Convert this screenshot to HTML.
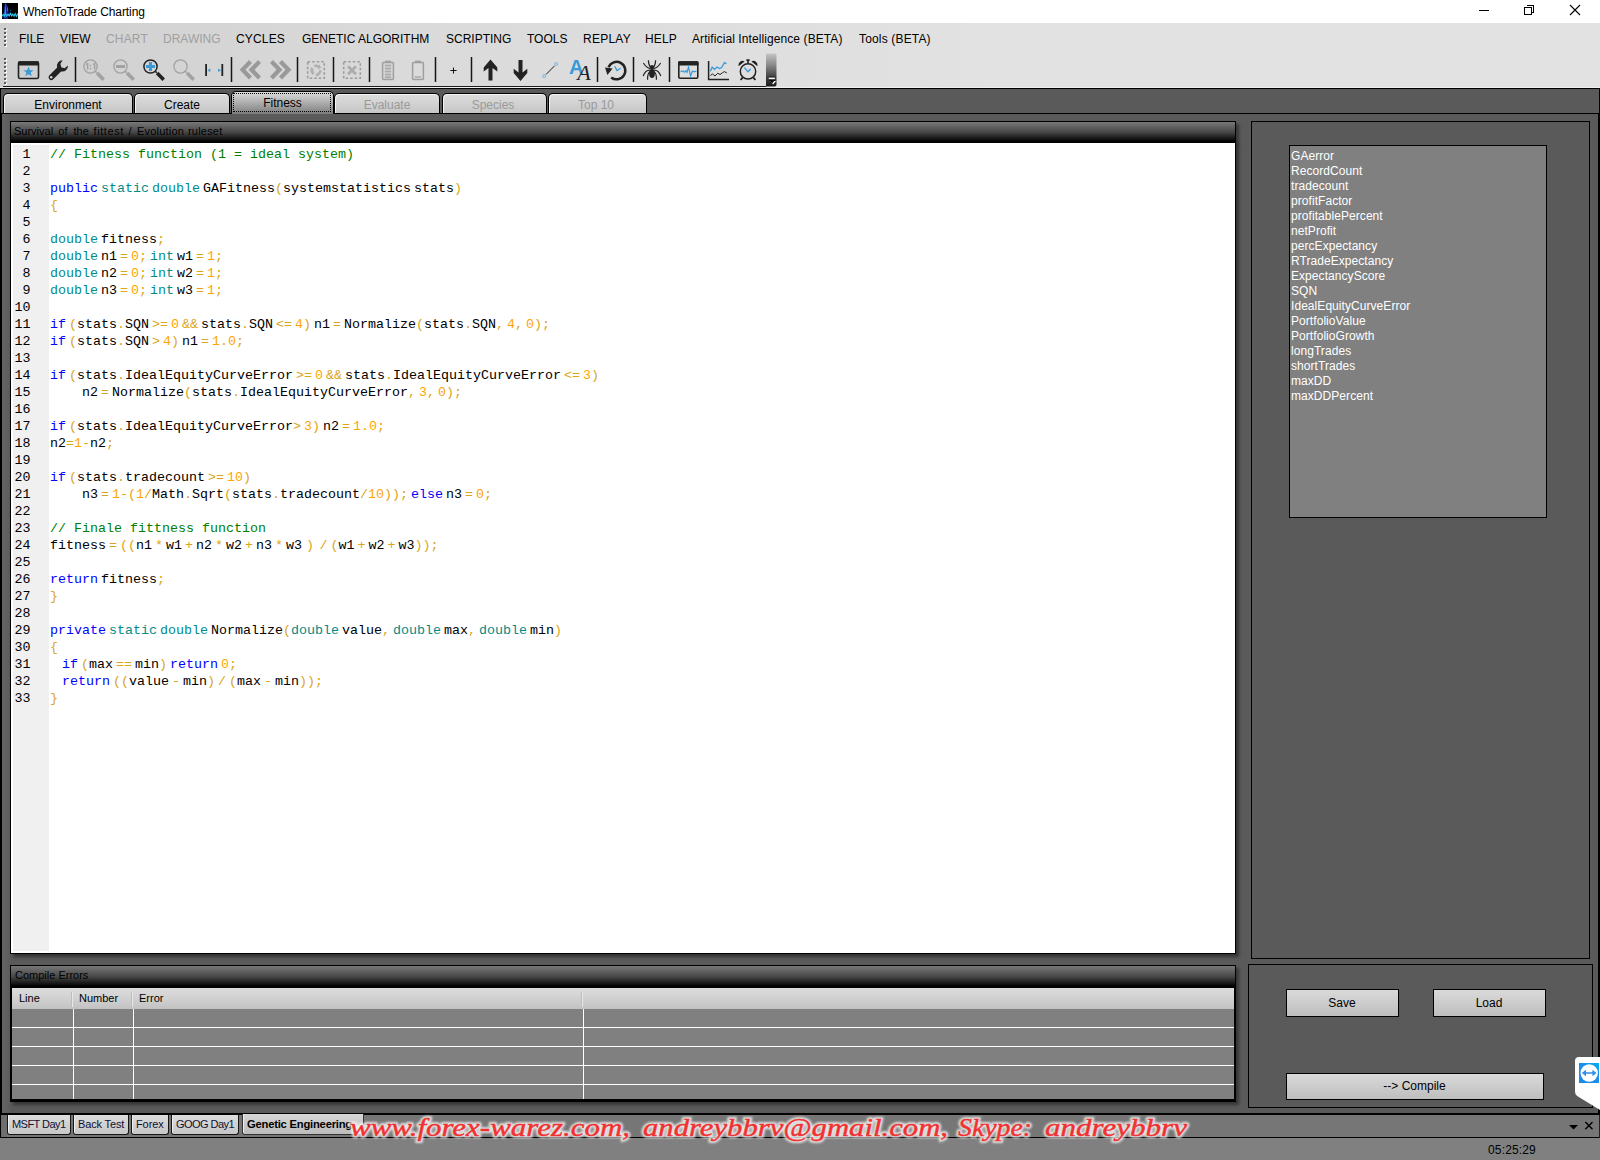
<!DOCTYPE html>
<html>
<head>
<meta charset="utf-8">
<title>WhenToTrade Charting</title>
<style>
*{box-sizing:border-box;margin:0;padding:0}
html,body{width:1600px;height:1160px;overflow:hidden;background:#5a5a5a;font-family:"Liberation Sans",sans-serif;}
.abs{position:absolute}
#titlebar{position:absolute;left:0;top:0;width:1600px;height:23px;background:#fff}
#title{position:absolute;left:23px;top:5px;font-size:12px;color:#000;letter-spacing:-0.09px;white-space:nowrap}
#menubar{position:absolute;left:0;top:23px;width:1600px;height:64px;background:linear-gradient(90deg,#cfcfcf 0,#dadada 400px,#e2e2e2 1000px,#e2e2e2 100%)}
.menu{position:absolute;top:32px;font-size:12px;color:#000;white-space:nowrap;line-height:15px}
.menu.dis{color:#a0a0a0}
#tbline{position:absolute;left:3px;top:86px;width:763px;height:1px;background:#1c1c1c}
#main{position:absolute;left:0;top:88px;width:1600px;height:1072px;background:#5a5a5a;border-top:1px solid #000;border-left:1px solid #000}
.tab{position:absolute;top:93px;height:20px;border:1px solid #000;border-bottom:none;border-radius:5px 5px 0 0;background:linear-gradient(#dcdcdc,#d2d2d2 50%,#c6c6c6);font-size:12px;text-align:center;line-height:23px;color:#000;box-shadow:inset 1px 1px 0 #f4f4f4}
.tab.dis{color:#9a9a9a}
.tab.sel{top:91px;height:23px;background:linear-gradient(#dcdcdc,#7c7c7c);line-height:22px;box-shadow:none}
.hdr{position:absolute;height:21px;box-shadow:3px 3px 3px rgba(0,0,0,.4);background:linear-gradient(#787878 0,#484848 50%,#000 97%);border:1px solid #000;font-size:11px;color:#000;line-height:17px;padding-left:3px;white-space:nowrap}
#editor{position:absolute;left:10px;top:142px;width:1226px;height:812px;background:#fff;border:1px solid #000;box-shadow:3px 3px 3px rgba(0,0,0,.45)}
#gutter{position:absolute;left:2px;top:2px;width:36px;bottom:2px;background:#f0f0f0}
#code{position:absolute;left:1px;top:3px;font-family:"Liberation Mono",monospace;font-size:13.33px;line-height:17px;white-space:pre;color:#000}
.ln{height:17px;position:relative}
.ln i{font-style:normal;position:absolute;left:-1.5px;width:20px;text-align:right;color:#000;word-spacing:0}
.ln b{font-weight:normal;position:absolute;left:38px;word-spacing:-5px}
.k{color:#0000ff}.t{color:#008b8b}.o{color:#daa520}.n{color:#ffa500}.c{color:#008000}
.grip{position:absolute;left:4px;width:3px;background-image:linear-gradient(#5a5a5a 0,#5a5a5a 2px,transparent 2px);background-size:2px 4px;background-repeat:repeat-y}
.gripw{position:absolute;left:5px;width:2px;background-image:linear-gradient(#fff 0,#fff 2px,transparent 2px);background-size:2px 4px;background-repeat:repeat-y}

#tabline{position:absolute;left:0;top:113px;width:1599px;height:1px;background:#000;border-left:2px solid #000}
.focus{position:absolute;left:1px;top:1px;right:2px;bottom:2px;border:1px dotted #000}
.hdr .w{position:absolute;top:0}
#grid{position:absolute;left:10px;top:988px;width:1226px;height:114px;background:#808080;border:2px solid #000;border-top:none;border-bottom-width:3px;overflow:hidden;box-shadow:3px 3px 3px rgba(0,0,0,.4)}
#ghead{position:absolute;left:0;top:0;width:100%;height:21px;background:linear-gradient(#dcdcdc,#d2d2d2 45%,#c2c2c2);font-size:11px;color:#000}
#ghead span{position:absolute;top:3px;line-height:14px}
#ghead u{position:absolute;top:4px;width:1px;height:15px;background:#e8e8e8;border-left:1px solid #bdbdbd;box-sizing:content-box}
#grid>i{position:absolute;top:21px;width:1px;height:100px;background:#fff}
#grid>s{position:absolute;left:0;width:100%;height:1px;background:#fff}
.rp{position:absolute;border:1px solid #000;background:#5a5a5a}
#lb{position:absolute;left:1289px;top:145px;width:258px;height:373px;border:1px solid #000;background:#808080;color:#fff;font-size:12px;line-height:15px;padding:3px 0 0 1px;white-space:nowrap;letter-spacing:.06px}
.btn{position:absolute;border:1px solid #000;background:linear-gradient(#dadada,#bebebe);font-size:12px;color:#000;text-align:center;line-height:26px;text-indent:-1px}

#leftedge{position:absolute;left:0;top:114px;width:10px;height:1001px;background:linear-gradient(90deg,#000 0,#000 2px,#646464 2px,#5c5c5c 10px)}#leftedge2{position:absolute;left:0;top:1115px;width:7px;height:22px;background:linear-gradient(90deg,#000 0,#000 1px,#6e6e6e 1px)}
#rightedge{position:absolute;left:1598px;top:113px;width:2px;height:1002px;background:#000}#rightedge2{position:absolute;left:1599px;top:88px;width:1px;height:26px;background:#000}#mbline{position:absolute;left:0;top:87px;width:1600px;height:1px;background:#f0f0f0}
#panelbot{position:absolute;left:0;top:1113px;width:1599px;height:2px;background:#000}
#dtabs{position:absolute;left:0;top:1115px;width:1600px;height:22px;background:#767676}
.dt{position:absolute;top:1115px;height:20px;border:1px solid #161616;border-top:none;border-radius:0 0 3px 3px;background:linear-gradient(#dedede,#cfcfcf 60%,#c6c6c6);font-size:11px;color:#101030;overflow:hidden;box-shadow:inset 1px 0 0 #efefef}
.dt span{position:absolute;top:2px;line-height:14px;white-space:nowrap}
.dt.sel{top:1114px;height:21px;font-weight:bold;color:#000;background:linear-gradient(#d6d6d6,#bcbcbc);border-color:#333}
.dt.sel span{top:3px;font-size:11.2px;letter-spacing:-.2px}
#dline{position:absolute;left:0;top:1137px;width:1600px;height:1px;background:#000}
#status{position:absolute;left:0;top:1138px;width:1600px;height:22px;background:#808080}
#clock{position:absolute;left:1488px;top:1143px;font-size:12px;color:#000;letter-spacing:.15px;line-height:14px}
</style>
</head>
<body>
<div id="titlebar"></div>
<svg class="abs" style="left:2px;top:3px" width="16" height="16" viewBox="0 0 16 16">
<rect width="16" height="16" fill="#000"/>
<path d="M1.6 16 C1.8 8 2.4 1 3.4 0 C5 1 6.4 5 6.6 10 C6.6 13 6 15 5.6 16Z" fill="#1a2aa8" opacity=".9"/>
<path d="M2.4 12 L3.2 0 L4.2 12Z" fill="#22a8e0"/>
<path d="M5 3.5 C6 5 6.3 7 6 8.5 L5.2 8Z" fill="#8a7ad8" opacity=".75"/>
<circle cx="8.5" cy="7.6" r=".7" fill="#1a6ea8"/>
<path d="M0 13 L1.2 11.4 L2.4 12.8 L3.6 11 L4.8 12.8 L6 11.2 L7.2 12.8 L8.4 10.4 L9.6 12.8 L10.8 11 L12 13.2 L13.2 10.6 L14.4 13.4 L16 10.6" stroke="#2cc4ee" stroke-width="1.15" fill="none"/>
<path d="M0.5 14 L2 13 L3.5 14.2 L5 13.2" stroke="#2cc4ee" stroke-width=".8" fill="none" opacity=".7"/>
</svg>
<div id="title">WhenToTrade Charting</div>
<svg class="abs" style="left:1470px;top:0" width="130" height="23" viewBox="0 0 130 23" shape-rendering="crispEdges">
<rect x="9" y="10" width="10" height="1" fill="#000"/>
<path d="M56.5 5.5 h7 v7 h-2 M54.5 7.5 h7.2 v7.2 h-7.2z" fill="none" stroke="#000" stroke-width="1.3"/>
<path d="M100 5 L110 15 M110 5 L100 15" stroke="#000" stroke-width="1.1" shape-rendering="geometricPrecision"/>
</svg>
<div id="menubar"></div>
<div class="gripw" style="top:29px;height:18px"></div><div class="grip" style="top:28px;height:18px"></div>
<div class="gripw" style="top:59px;height:26px"></div><div class="grip" style="top:58px;height:26px"></div>
<div class="menu" style="left:19px">FILE</div>
<div class="menu" style="left:60px">VIEW</div>
<div class="menu dis" style="left:106px;letter-spacing:0.17px">CHART</div>
<div class="menu dis" style="left:163px">DRAWING</div>
<div class="menu" style="left:236px;letter-spacing:0.16px">CYCLES</div>
<div class="menu" style="left:302px">GENETIC ALGORITHM</div>
<div class="menu" style="left:446px">SCRIPTING</div>
<div class="menu" style="left:527px">TOOLS</div>
<div class="menu" style="left:583px;letter-spacing:0.25px">REPLAY</div>
<div class="menu" style="left:645px;letter-spacing:0.16px">HELP</div>
<div class="menu" style="left:692px;letter-spacing:0.09px">Artificial Intelligence (BETA)</div>
<div class="menu" style="left:859px;letter-spacing:0.16px">Tools (BETA)</div>
<div id="tbline"></div>
<div id="main"></div>
<svg class="abs" style="left:0;top:53px" width="790" height="35" viewBox="0 53 790 35">
<rect x="18.5" y="62" width="20" height="16.5" rx="1.5" fill="none" stroke="#222" stroke-width="1.6"/><rect x="18" y="61.3" width="21" height="4.2" rx="1.2" fill="#222"/>
<path d="M28.5 66.6 L29.9 70.2 L33.6 70.3 L30.7 72.6 L31.7 76.3 L28.5 74.2 L25.3 76.3 L26.3 72.6 L23.4 70.3 L27.1 70.2Z" fill="#3a9ad9"/>
<path d="M62.6 60.3 A5.6 5.6 0 0 0 57.2 67.6 L49.2 75.6 A2.7 2.7 0 0 0 53 79.4 L61 71.4 A5.6 5.6 0 0 0 68 65.6 L64.6 68.2 L61.2 67.2 L60.4 63.8 Z" fill="#222"/><circle cx="51.2" cy="77.3" r="1.2" fill="#ddd"/>
<rect x="74.75" y="57" width="1.5" height="25" fill="#161616"/>
<circle cx="90.5" cy="66.5" r="6.6" fill="none" stroke="#a2a2a2" stroke-width="1.3"/><path d="M95.1 71.1 L96.7 72.7" stroke="#a2a2a2" stroke-width="1.6"/><path d="M97.1 73.1 L103.7 79.7" stroke="#a2a2a2" stroke-width="3.6"/>
<path d="M86.2 64.6 L87.6 63.6 L87.6 69.6 M93.2 64.6 L94.6 63.6 L94.6 69.6" fill="none" stroke="#a2a2a2" stroke-width="1.5"/><rect x="89.8" y="64.8" width="1.5" height="1.5" fill="#a2a2a2"/><rect x="89.8" y="67.8" width="1.5" height="1.5" fill="#a2a2a2"/>
<circle cx="120.5" cy="66.5" r="6.6" fill="none" stroke="#a2a2a2" stroke-width="1.3"/><path d="M125.1 71.1 L126.7 72.7" stroke="#a2a2a2" stroke-width="1.6"/><path d="M127.1 73.1 L133.7 79.7" stroke="#a2a2a2" stroke-width="3.6"/>
<rect x="116" y="65" width="9" height="3" fill="#a2a2a2"/>
<circle cx="150.5" cy="66.5" r="6.6" fill="none" stroke="#222" stroke-width="1.5"/><path d="M155.1 71.1 L156.7 72.7" stroke="#222" stroke-width="1.6"/><path d="M157.1 73.1 L163.7 79.7" stroke="#222" stroke-width="3.6"/>
<path d="M146 66.5 h9 M150.5 62 v9" stroke="#3a9ad9" stroke-width="3"/>
<circle cx="180.5" cy="66.5" r="6.6" fill="none" stroke="#a2a2a2" stroke-width="1.3"/><path d="M185.1 71.1 L186.7 72.7" stroke="#a2a2a2" stroke-width="1.6"/><path d="M187.1 73.1 L193.7 79.7" stroke="#a2a2a2" stroke-width="3.6"/>
<rect x="205.2" y="64" width="1.8" height="12" fill="#222"/><rect x="221.4" y="64" width="1.8" height="12" fill="#222"/><path d="M207.3 70.2 L210.3 68.4 L210.3 72Z M221.1 70.2 L218.1 68.4 L218.1 72Z" fill="#3a9ad9"/>
<rect x="230.75" y="57" width="1.5" height="25" fill="#161616"/>
<path d="M250.5 61.5 L242.5 69.7 L250.5 78" fill="none" stroke="#999" stroke-width="4.2" stroke-linejoin="miter"/><path d="M259.5 61.5 L251.5 69.7 L259.5 78" fill="none" stroke="#999" stroke-width="4.2" stroke-linejoin="miter"/>
<path d="M271.5 61.5 L279.5 69.7 L271.5 78" fill="none" stroke="#999" stroke-width="4.2" stroke-linejoin="miter"/><path d="M280.5 61.5 L288.5 69.7 L280.5 78" fill="none" stroke="#999" stroke-width="4.2" stroke-linejoin="miter"/>
<rect x="296.75" y="57" width="1.5" height="25" fill="#161616"/>
<rect x="307.7" y="61.7" width="16.6" height="16.6" fill="none" stroke="#9c9c9c" stroke-width="1.6" stroke-dasharray="2.5 2.03"/>
<circle cx="316" cy="70.2" r="4.4" fill="none" stroke="#b0b0b0" stroke-width="2.6" stroke-dasharray="6.6 2.6"/><path d="M310 70.5 l3.2 -2 l0.6 3.4z M319.5 64.6 l1 3.6 l-3.4 -0.6z M319 75.8 l-3.6 0.6 l2 -3z" fill="#b0b0b0"/>
<rect x="332.75" y="57" width="1.5" height="25" fill="#161616"/>
<rect x="343.7" y="61.7" width="16.6" height="16.6" fill="none" stroke="#9c9c9c" stroke-width="1.6" stroke-dasharray="2.5 2.03"/>
<path d="M348 66.2 L356 74.2 M356 66.2 L348 74.2" stroke="#acacac" stroke-width="2.8"/>
<rect x="368.75" y="57" width="1.5" height="25" fill="#161616"/>
<rect x="385" y="60.6" width="6" height="2.4" fill="#a2a2a2"/><rect x="382.6" y="62.6" width="10.8" height="16.8" rx="0.8" fill="none" stroke="#9e9e9e" stroke-width="1.5"/><rect x="384.8" y="64.6" width="6.4" height="1.9" fill="#ababab"/><rect x="384.8" y="67.6" width="6.4" height="1.9" fill="#ababab"/><rect x="384.8" y="70.6" width="6.4" height="1.9" fill="#ababab"/><rect x="384.8" y="73.6" width="6.4" height="1.9" fill="#ababab"/><rect x="384.8" y="76.3" width="6.4" height="1.9" fill="#ababab"/>
<rect x="415" y="60.6" width="6" height="2.4" fill="#a2a2a2"/><rect x="412.6" y="62.6" width="10.8" height="16.8" rx="0.8" fill="none" stroke="#9e9e9e" stroke-width="1.5"/><rect x="414.8" y="76.2" width="6.4" height="1.7" fill="#b0b0b0"/>
<rect x="434.75" y="57" width="1.5" height="25" fill="#161616"/>
<path d="M450.4 70.5 h6.2 M453.5 67.6 v6" stroke="#111" stroke-width="1"/>
<rect x="470.75" y="57" width="1.5" height="25" fill="#161616"/>
<path d="M490.5 59.4 L497.3 67.4 L497.3 71.6 L492.5 67.9 L492.5 80.5 L488.5 80.5 L488.5 67.9 L483.7 71.6 L483.7 67.4Z" fill="#222"/>
<path d="M520.5 81 L527.3 73 L527.3 68.8 L522.5 72.5 L522.5 59.9 L518.5 59.9 L518.5 72.5 L513.7 68.8 L513.7 73Z" fill="#222"/>
<path d="M546 74.5 L554.6 65.8" stroke="#222" stroke-width="1"/><circle cx="544.2" cy="76.2" r="1.5" fill="none" stroke="#6fb7e6" stroke-width="1"/><circle cx="556.2" cy="64" r="1.5" fill="none" stroke="#6fb7e6" stroke-width="1"/>
<text x="569" y="74.4" font-size="20" font-weight="bold" fill="#3a9ad9" font-family="Liberation Sans">A</text>
<text x="577.3" y="80.4" font-size="21" font-style="italic" fill="#222" font-family="Liberation Serif" textLength="13.5" lengthAdjust="spacingAndGlyphs">A</text>
<rect x="596.75" y="57" width="1.5" height="25" fill="#161616"/>
<path d="M608.6 67.2 A8.7 8.7 0 1 1 611.2 77.4" fill="none" stroke="#222" stroke-width="2.5"/><path d="M605 67.6 L612.6 68.6 L607.4 75Z" fill="#222"/><path d="M614.8 66.2 L617 70.6 L620.6 68.3" fill="none" stroke="#3a9ad9" stroke-width="1.3"/>
<rect x="632.75" y="57" width="1.5" height="25" fill="#161616"/>
<ellipse cx="652" cy="73.6" rx="2.9" ry="4.4" fill="#222"/><ellipse cx="652" cy="67.6" rx="2.2" ry="2.6" fill="#222"/><path d="M650.5 67 Q648.5 65 648.4 60.2" fill="none" stroke="#222" stroke-width="1.2"/><path d="M650 68.5 Q646 67.5 643.4 63" fill="none" stroke="#222" stroke-width="1.2"/><path d="M650 70.2 Q645.5 70 643.2 76" fill="none" stroke="#222" stroke-width="1.2"/><path d="M650.2 71.5 Q647.4 73 647.6 79.8" fill="none" stroke="#222" stroke-width="1.2"/><path d="M653.5 67 Q655.5 65 655.6 60.2" fill="none" stroke="#222" stroke-width="1.2"/><path d="M654 68.5 Q658 67.5 660.6 63" fill="none" stroke="#222" stroke-width="1.2"/><path d="M654 70.2 Q658.5 70 660.8 76" fill="none" stroke="#222" stroke-width="1.2"/><path d="M653.8 71.5 Q656.6 73 656.4 79.8" fill="none" stroke="#222" stroke-width="1.2"/>
<rect x="668.75" y="57" width="1.5" height="25" fill="#161616"/>
<rect x="678.8" y="62" width="19" height="16.3" rx="1.2" fill="none" stroke="#222" stroke-width="1.6"/><rect x="678" y="61.2" width="20.6" height="4.2" rx="1.2" fill="#222"/>
<path d="M680.5 71.6 L683 71 L684.5 72.2 L686 70.8 L687 72.4 L688.5 67.2 L690.6 76 L692.4 71 L694 71.8 L696.4 71.2" fill="none" stroke="#3a9ad9" stroke-width="1.2"/>
<path d="M708.6 61 L708.6 79.6 L729 79.6" fill="none" stroke="#222" stroke-width="1.5"/>
<path d="M710.4 71.2 L712.2 67.2 L714.6 69.4 L717 67 L719.6 68.6 L721.6 67.6 L724.4 62.6 L726.6 63.6" fill="none" stroke="#3a9ad9" stroke-width="1.3"/>
<path d="M710.4 75.4 L712.6 74 L715 76 L717.8 73.2 L720 74.6 L722.6 72.6 L724.4 71.6 L726.8 73" fill="none" stroke="#222" stroke-width="1"/>
<circle cx="748" cy="71.4" r="7.7" fill="none" stroke="#222" stroke-width="1.5"/>
<path d="M738.6 66.2 A4.2 4.2 0 0 1 744.6 61.4Z M757.4 66.2 A4.2 4.2 0 0 0 751.4 61.4Z" fill="#222"/><rect x="747.2" y="59.6" width="1.6" height="3.4" fill="#222"/><rect x="746.2" y="59.4" width="3.6" height="1.4" fill="#222"/>
<path d="M742.6 77.6 L740.6 80 M753.4 77.6 L755.4 80" stroke="#222" stroke-width="1.8"/>
<path d="M744.4 67.6 L748 71.8 L750.6 69" fill="none" stroke="#3a9ad9" stroke-width="1.4"/>
<defs><linearGradient id="ovg" x1="0" y1="0" x2="0" y2="1"><stop offset="0" stop-color="#c4c4c4"/><stop offset=".35" stop-color="#8a8a8a"/><stop offset=".75" stop-color="#3a3a3a"/><stop offset="1" stop-color="#1a1a1a"/></linearGradient></defs>
<path d="M766 53.5 L774.5 53.5 Q776.5 53.5 776.5 55.5 L776.5 84.5 Q776.5 86.6 774.5 86.6 L766 86.6Z" fill="url(#ovg)"/>
<rect x="768.8" y="76.6" width="6" height="1" fill="#111"/><rect x="768.8" y="77.6" width="6" height="1.5" fill="#fff"/><path d="M770.2 81 L776 81 L773.1 84.4Z" fill="#fff"/><path d="M769.2 80 L775 80 L772.1 83.5Z" fill="#0a0a0a"/>
</svg>

<div id="tabline"></div>
<div class="tab" style="left:3px;width:130px">Environment</div>
<div class="tab" style="left:134px;width:96px">Create</div>
<div class="tab dis" style="left:334px;width:106px">Evaluate</div>
<div class="tab dis" style="left:442px;width:105px;text-indent:-3px">Species</div>
<div class="tab dis" style="left:548px;width:99px;text-indent:-3px">Top 10</div>
<div class="tab sel" style="left:231px;width:103px">Fitness<span class="focus"></span></div>


<div class="hdr" style="left:10px;top:121px;width:1226px;height:22px;padding-top:1px"><span class="w" style="top:1.3px;left:3px">Survival</span><span class="w" style="top:1.3px;left:47.3px">of</span><span class="w" style="top:1.3px;left:62.5px">the</span><span class="w" style="top:1.3px;left:82.5px;letter-spacing:.6px">fittest</span><span class="w" style="top:1.3px;left:117.5px">/</span><span class="w" style="top:1.3px;left:126px;letter-spacing:.2px">Evolution</span><span class="w" style="top:1.3px;left:177px;letter-spacing:.2px">ruleset</span></div>
<div id="editor"><div id="gutter"></div><div id="code"><div class="ln"><i>1</i><b><span class="c" style="word-spacing:0">// Fitness function (1 = ideal system)</span></b></div><div class="ln"><i>2</i><b></b></div><div class="ln"><i>3</i><b><span class="k">public</span> <span class="t">static</span> <span class="t">double</span> GAFitness<span class="o">(</span>systemstatistics stats<span class="o">)</span></b></div><div class="ln"><i>4</i><b><span class="o">{</span></b></div><div class="ln"><i>5</i><b></b></div><div class="ln"><i>6</i><b><span class="t">double</span> fitness<span class="o">;</span></b></div><div class="ln"><i>7</i><b><span class="t">double</span> n1 <span class="o">=</span> <span class="n">0</span><span class="o">;</span> <span class="t">int</span> w1 <span class="o">=</span> <span class="n">1</span><span class="o">;</span></b></div><div class="ln"><i>8</i><b><span class="t">double</span> n2 <span class="o">=</span> <span class="n">0</span><span class="o">;</span> <span class="t">int</span> w2 <span class="o">=</span> <span class="n">1</span><span class="o">;</span></b></div><div class="ln"><i>9</i><b><span class="t">double</span> n3 <span class="o">=</span> <span class="n">0</span><span class="o">;</span> <span class="t">int</span> w3 <span class="o">=</span> <span class="n">1</span><span class="o">;</span></b></div><div class="ln"><i>10</i><b></b></div><div class="ln"><i>11</i><b><span class="k">if</span> <span class="o">(</span>stats<span class="o">.</span>SQN <span class="o">&gt;</span><span class="o">=</span> <span class="n">0</span> <span class="o">&amp;</span><span class="o">&amp;</span> stats<span class="o">.</span>SQN <span class="o">&lt;</span><span class="o">=</span> <span class="n">4</span><span class="o">)</span> n1 <span class="o">=</span> Normalize<span class="o">(</span>stats<span class="o">.</span>SQN<span class="o">,</span> <span class="n">4</span><span class="o">,</span> <span class="n">0</span><span class="o">)</span><span class="o">;</span></b></div><div class="ln"><i>12</i><b><span class="k">if</span> <span class="o">(</span>stats<span class="o">.</span>SQN <span class="o">&gt;</span> <span class="n">4</span><span class="o">)</span> n1 <span class="o">=</span> <span class="n">1.0</span><span class="o">;</span></b></div><div class="ln"><i>13</i><b></b></div><div class="ln"><i>14</i><b><span class="k">if</span> <span class="o">(</span>stats<span class="o">.</span>IdealEquityCurveError <span class="o">&gt;</span><span class="o">=</span> <span class="n">0</span> <span class="o">&amp;</span><span class="o">&amp;</span> stats<span class="o">.</span>IdealEquityCurveError <span class="o">&lt;</span><span class="o">=</span> <span class="n">3</span><span class="o">)</span></b></div><div class="ln"><i>15</i><b style="left:70px">n2 <span class="o">=</span> Normalize<span class="o">(</span>stats<span class="o">.</span>IdealEquityCurveError<span class="o">,</span> <span class="n">3</span><span class="o">,</span> <span class="n">0</span><span class="o">)</span><span class="o">;</span></b></div><div class="ln"><i>16</i><b></b></div><div class="ln"><i>17</i><b><span class="k">if</span> <span class="o">(</span>stats<span class="o">.</span>IdealEquityCurveError<span class="o">&gt;</span> <span class="n">3</span><span class="o">)</span> n2 <span class="o">=</span> <span class="n">1.0</span><span class="o">;</span></b></div><div class="ln"><i>18</i><b>n2<span class="o">=</span><span class="n">1</span><span class="o">-</span>n2<span class="o">;</span></b></div><div class="ln"><i>19</i><b></b></div><div class="ln"><i>20</i><b><span class="k">if</span> <span class="o">(</span>stats<span class="o">.</span>tradecount <span class="o">&gt;</span><span class="o">=</span> <span class="n">10</span><span class="o">)</span></b></div><div class="ln"><i>21</i><b style="left:70px">n3 <span class="o">=</span> <span class="n">1</span><span class="o">-</span><span class="o">(</span><span class="n">1</span><span class="o">/</span>Math<span class="o">.</span>Sqrt<span class="o">(</span>stats<span class="o">.</span>tradecount<span class="o">/</span><span class="n">10</span><span class="o">)</span><span class="o">)</span><span class="o">;</span> <span class="k">else</span> n3 <span class="o">=</span> <span class="n">0</span><span class="o">;</span></b></div><div class="ln"><i>22</i><b></b></div><div class="ln"><i>23</i><b><span class="c" style="word-spacing:0">// Finale fittness function</span></b></div><div class="ln"><i>24</i><b>fitness <span class="o">=</span> <span class="o">(</span><span class="o">(</span>n1 <span class="o">*</span> w1 <span class="o">+</span> n2 <span class="o">*</span> w2 <span class="o">+</span> n3 <span class="o">*</span> w3 <span class="o" style="margin-left:1px">)</span> <span class="o" style="margin-left:2.5px">/</span> <span class="o">(</span>w1 <span class="o">+</span> w2 <span class="o">+</span> w3<span class="o">)</span><span class="o">)</span><span class="o">;</span></b></div><div class="ln"><i>25</i><b></b></div><div class="ln"><i>26</i><b><span class="k">return</span> fitness<span class="o">;</span></b></div><div class="ln"><i>27</i><b><span class="o">}</span></b></div><div class="ln"><i>28</i><b></b></div><div class="ln"><i>29</i><b><span class="k">private</span> <span class="t">static</span> <span class="t">double</span> Normalize<span class="o">(</span><span class="t">double</span> value<span class="o">,</span> <span class="t">double</span> max<span class="o">,</span> <span class="t">double</span> min<span class="o">)</span></b></div><div class="ln"><i>30</i><b><span class="o">{</span></b></div><div class="ln"><i>31</i><b style="left:50px"><span class="k">if</span> <span class="o">(</span>max <span class="o">=</span><span class="o">=</span> min<span class="o">)</span> <span class="k">return</span> <span class="n">0</span><span class="o">;</span></b></div><div class="ln"><i>32</i><b style="left:50px"><span class="k">return</span> <span class="o">(</span><span class="o">(</span>value <span class="o">-</span> min<span class="o">)</span> <span class="o">/</span> <span class="o">(</span>max <span class="o">-</span> min<span class="o">)</span><span class="o">)</span><span class="o">;</span></b></div><div class="ln"><i>33</i><b><span class="o">}</span></b></div></div></div>
<div class="hdr" style="left:10px;top:965px;width:1226px;height:23px"><span class="w" style="left:4px;top:1px">Compile Errors</span></div>
<div id="grid">
<div id="ghead"><span style="left:7px">Line</span><span style="left:67px">Number</span><span style="left:127px">Error</span><u style="left:59px"></u><u style="left:119px"></u><u style="left:569px"></u></div>
<i style="left:61px"></i><i style="left:121px"></i><i style="left:571px"></i>
<s style="top:39px"></s><s style="top:58px"></s><s style="top:77px"></s><s style="top:96px"></s>
</div>
<div class="rp" style="left:1251px;top:121px;width:339px;height:838px"></div>
<div id="lb"><div>GAerror</div><div>RecordCount</div><div>tradecount</div><div>profitFactor</div><div>profitablePercent</div><div>netProfit</div><div>percExpectancy</div><div>RTradeExpectancy</div><div>ExpectancyScore</div><div>SQN</div><div>IdealEquityCurveError</div><div>PortfolioValue</div><div>PortfolioGrowth</div><div>longTrades</div><div>shortTrades</div><div>maxDD</div><div>maxDDPercent</div></div>
<div class="rp" style="left:1248px;top:964px;width:345px;height:144px"></div>
<div class="btn" style="left:1286px;top:989px;width:113px;height:28px">Save</div>
<div class="btn" style="left:1433px;top:989px;width:113px;height:28px">Load</div>
<div class="btn" style="left:1286px;top:1073px;width:258px;height:27px;line-height:24px">--&gt; Compile</div>


<div id="leftedge"></div>
<div id="rightedge"></div><div id="rightedge2"></div><div id="mbline"></div>
<div id="panelbot"></div>
<div id="dtabs"></div><div id="leftedge2"></div>
<div class="dt" style="left:7px;width:64px"><span style="left:4px;letter-spacing:-.55px">MSFT Day1</span></div>
<div class="dt" style="left:73px;width:56px"><span style="left:4px;letter-spacing:-.15px">Back Test</span></div>
<div class="dt" style="left:131px;width:38px"><span style="left:4px;letter-spacing:-.1px">Forex</span></div>
<div class="dt" style="left:171px;width:68px"><span style="left:4px;letter-spacing:-.55px">GOOG Day1</span></div>
<div class="dt sel" style="left:242px;width:122px"><span style="left:4px">Genetic Engineering</span></div>
<div id="dline"></div><div class="abs" style="left:1599px;top:1115px;width:1px;height:23px;background:#222"></div>
<div id="status"></div>
<div id="clock">05:25:29</div>
<svg class="abs" style="left:1566px;top:1118px" width="30" height="14" viewBox="1566 1118 30 14"><path d="M1569 1125 L1578 1125 L1573.5 1129.6Z" fill="#000"/><path d="M1585.3 1122 L1592.5 1129.2 M1592.5 1122 L1585.3 1129.2" stroke="#000" stroke-width="1.4"/></svg>
<svg class="abs" style="left:340px;top:1104px" width="860" height="48" viewBox="340 1104 860 48" font-family="Liberation Serif" font-style="italic" font-size="26"><defs><filter id="glow" x="-5%" y="-30%" width="110%" height="160%"><feGaussianBlur stdDeviation="1.3"/></filter></defs><g filter="url(#glow)" opacity=".8"><text x="350" y="1135.5" textLength="280" lengthAdjust="spacingAndGlyphs" fill="#fff" stroke="#fff" stroke-width="4">www.forex-warez.com,</text><text x="643" y="1135.5" textLength="305" lengthAdjust="spacingAndGlyphs" fill="#fff" stroke="#fff" stroke-width="4">andreybbrv@gmail.com,</text><text x="958" y="1135.5" textLength="74" lengthAdjust="spacingAndGlyphs" fill="#fff" stroke="#fff" stroke-width="4">Skype:</text><text x="1045" y="1135.5" textLength="142" lengthAdjust="spacingAndGlyphs" fill="#fff" stroke="#fff" stroke-width="4">andreybbrv</text></g><text x="350" y="1135.5" textLength="280" lengthAdjust="spacingAndGlyphs" fill="#f23030" stroke="#f23030" stroke-width=".45">www.forex-warez.com,</text><text x="643" y="1135.5" textLength="305" lengthAdjust="spacingAndGlyphs" fill="#f23030" stroke="#f23030" stroke-width=".45">andreybbrv@gmail.com,</text><text x="958" y="1135.5" textLength="74" lengthAdjust="spacingAndGlyphs" fill="#f23030" stroke="#f23030" stroke-width=".45">Skype:</text><text x="1045" y="1135.5" textLength="142" lengthAdjust="spacingAndGlyphs" fill="#f23030" stroke="#f23030" stroke-width=".45">andreybbrv</text></svg>
<svg class="abs" style="left:1572px;top:1054px" width="28" height="58" viewBox="1572 1054 28 58">
<defs><linearGradient id="tvg" x1="0" y1="1" x2="1" y2="0"><stop offset="0" stop-color="#1e88e5"/><stop offset=".6" stop-color="#1e90ea"/><stop offset="1" stop-color="#00aeef"/></linearGradient></defs>
<path d="M1600 1057 L1579 1057 Q1575 1057 1575 1061 L1575 1091 Q1575 1094.5 1578 1096.5 L1600 1110Z" fill="#fff"/>
<rect x="1579" y="1063" width="20" height="20" fill="url(#tvg)"/>
<circle cx="1589.2" cy="1073" r="8.7" fill="#fff"/>
<path d="M1581.8 1073 L1586 1069.8 L1586 1072.2 L1592.4 1072.2 L1592.4 1069.8 L1596.6 1073 L1592.4 1076.2 L1592.4 1073.8 L1586 1073.8 L1586 1076.2Z" fill="#2f8fe8"/>
</svg>

</body>
</html>
